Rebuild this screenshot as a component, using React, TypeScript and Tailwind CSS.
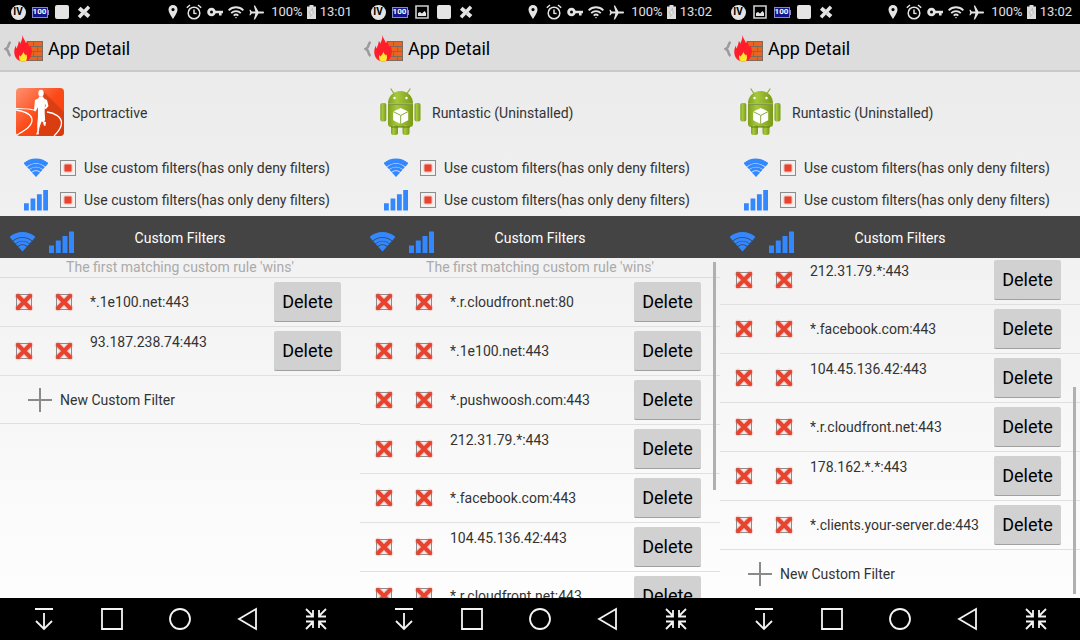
import React from 'react'

type Rule = { host: string; tall?: boolean }

type Screen = {
  id: string
  time: string
  icons: string[]
  app: string
  runner?: boolean
  hint?: boolean
  rules: Rule[]
  addRow?: boolean
  scroll?: 'top' | 'bottom'
}

const screens: Screen[] = [
  {
    id: 'a',
    time: '13:01',
    icons: ['iv', 'battery', 'square', 'cross'],
    app: 'Sportractive',
    runner: true,
    hint: true,
    rules: [{ host: '*.1e100.net:443' }, { host: '93.187.238.74:443', tall: true }],
    addRow: true,
  },
  {
    id: 'b',
    time: '13:02',
    icons: ['iv', 'battery', 'image', 'square', 'cross'],
    app: 'Runtastic (Uninstalled)',
    hint: true,
    rules: [
      { host: '*.r.cloudfront.net:80' },
      { host: '*.1e100.net:443' },
      { host: '*.pushwoosh.com:443' },
      { host: '212.31.79.*:443', tall: true },
      { host: '*.facebook.com:443' },
      { host: '104.45.136.42:443', tall: true },
      { host: '*.r.cloudfront.net:443' },
    ],
    scroll: 'top',
  },
  {
    id: 'c',
    time: '13:02',
    icons: ['iv', 'image', 'battery', 'square', 'cross'],
    app: 'Runtastic (Uninstalled)',
    rules: [
      { host: '212.31.79.*:443', tall: true },
      { host: '*.facebook.com:443' },
      { host: '104.45.136.42:443', tall: true },
      { host: '*.r.cloudfront.net:443' },
      { host: '178.162.*.*:443', tall: true },
      { host: '*.clients.your-server.de:443' },
    ],
    addRow: true,
    scroll: 'bottom',
  },
]

const NoticeIcon = ({ name }: { name: string }) => {
  if (name === 'iv')
    return <span className="flex size-[15px] items-center justify-center rounded-full bg-[#e4e4e4] text-[10px] font-bold leading-none text-black">IV</span>
  if (name === 'battery')
    return (
      <span className="flex items-center">
        <span className="flex h-[11px] w-4 items-center justify-center border border-[#8a8ac8] bg-[#15158c] text-[8px] font-bold leading-none text-white">100</span>
        <span className="h-[5px] w-px bg-[#8a8ac8]" />
      </span>
    )
  if (name === 'image')
    return (
      <svg viewBox="0 0 14 14" className="size-3.5">
        <path d="M1 1h12v12H1z" fill="none" stroke="#cfcfcf" strokeWidth="1.6" />
        <path d="M3 11V8l2-1 2 1.6L9.5 6 11 8v3z" fill="#e4e4e4" />
      </svg>
    )
  if (name === 'square') return <span className="size-3.5 rounded-xs bg-[#e4e4e4]" />
  return (
    <svg viewBox="0 0 14 14" className="size-3.5" stroke="#e4e4e4" fill="none">
      <path d="M2 12.2L12 1.8" strokeWidth="3.4" />
      <path d="M2.2 3.2l3.6 3M8.2 8.2l3.8 3.4" strokeWidth="4" />
    </svg>
  )
}

const StatusBar = ({ time, icons }: { time: string; icons: string[] }) => (
  <div className="flex h-6 shrink-0 items-center bg-black pl-[7px] pr-2 text-[13px] text-[#e0e0e0]">
    {icons.map((name) => (
      <span key={name} className="flex w-[22px] justify-center"><NoticeIcon name={name} /></span>
    ))}
    <div className="ml-auto flex items-center">
      <span className="flex w-[21px] justify-center">
        <svg viewBox="0 0 10 14" className="h-3.5 w-2.5"><path fillRule="evenodd" d="M5 0a4.5 4.5 0 0 0-4.5 4.6C.5 8 5 14 5 14s4.500-6 4.500-9.400A4.500 4.500 0 0 0 5 0zm0 3a1.600 1.600 0 1 1 0 3.200A1.600 1.600 0 0 1 5 3z" fill="#e4e4e4" /></svg>
      </span>
      <span className="flex w-[21px] justify-center">
        <svg viewBox="0 0 16 16" className="size-4" fill="none" stroke="#e4e4e4" strokeWidth="1.500">
          <circle cx="8" cy="9" r="5.800" />
          <path d="M8 5.500V9.300l2.600.1M.8 3.800L4 1M15.200 3.800L12 1" />
        </svg>
      </span>
      <span className="flex w-[21px] justify-center">
        <svg viewBox="0 0 16 10" className="h-2.5 w-4" fill="none" stroke="#e4e4e4">
          <circle cx="4.500" cy="5" r="2.900" strokeWidth="2.800" />
          <path d="M8 5h8M13.300 5v3.500" strokeWidth="2.600" />
        </svg>
      </span>
      <span className="flex w-[21px] justify-center">
        <svg viewBox="0 0 16 13" className="h-[13px] w-4" fill="none" stroke="#e4e4e4" strokeWidth="1.800">
          <path d="M.6 4.300a10.500 10.500 0 0 1 14.800 0M3.200 7.100a6.800 6.800 0 0 1 9.600 0M5.700 9.600a3.300 3.300 0 0 1 4.600 0" />
          <path d="M6.800 11.200h2.400L8 12.600z" fill="#e4e4e4" stroke="none" />
        </svg>
      </span>
      <span className="flex w-[21px] justify-center">
        <svg viewBox="0 0 15 15" className="size-[15px]" fill="#e4e4e4">
          <path d="M15 7.500c0-.7-.5-1-1.200-1H9.500L6 .5H4.800l1.600 6H2.800L1.500 4.700H.4l.8 2.800-.8 2.800h1.100l1.300-1.800h3.600l-1.600 6H6l3.500-6h4.300c.7 0 1.200-.3 1.200-1z" />
        </svg>
      </span>
      <span className="ml-1">100%</span>
      <svg viewBox="0 0 9 14" className="mx-1 h-3.5 w-[9px]">
        <path d="M0 1.500h2.500V0h4v1.500H9V14H0z" fill="#dcdcdc" />
        <path d="M5.500 3.500L2.200 8h2l-.7 3.500L6.800 7h-2z" fill="#fff" stroke="#999" strokeWidth=".5" />
      </svg>
      <span>{time}</span>
    </div>
  </div>
)

const FirewallIcon = () => (
  <svg viewBox="0 0 30 28" className="h-7 w-[30px]">
    <path d="M13 6h16v20H13z" fill="#7d6a60" />
    <path d="M13 7h6v4h-6zM20 7h8v4h-8zM13 12h10v4H13zM24 12h4v4h-4zM13 17h6v4h-6zM20 17h8v4h-8zM13 22h10v3H13zM24 22h4v3h-4z" fill="#e8641f" />
    <path d="M8.500 0c.5 3.500 3 5.500 3.300 8 .8-.6 1-1.500 1-2.500 1.700 3 1.500 4.500 3 7 .5-.8.600-1.500.600-2.500 1.600 3.500 2 7 .6 11-1 3-3.500 5.500-7.500 5.500-4.500 0-8-2.500-9-7C-.2 15.500.8 12.500 2 10.500c0 1.500.2 2.300.8 3C3.500 10.500 4.500 9.500 4.800 6c1 .8 1.300 1.800 1.300 2.800C7.500 6 8.500 3.500 8.500 0z" fill="#ff1f2b" />
    <path d="M9.500 16.500c.2 2 1.500 2.500 1.800 4 .5-.5.700-1 .7-1.800 1.600 3 1.200 5.300-.3 7.800H7c-2-1.500-2.300-4-1.500-6.500.5.500.600 1 .8 1.600 1.500-1.500 2.600-3 3.200-5.100z" fill="#ffe92e" />
  </svg>
)

const RunnerIcon = () => (
  <svg viewBox="0 0 48 48" className="size-12 rounded">
    <defs>
      <linearGradient id="tile" x1="0" y1="0" x2="1" y2="1">
        <stop offset="0" stopColor="#ff9270" />
        <stop offset=".5" stopColor="#fb4a18" />
        <stop offset="1" stopColor="#f83c06" />
      </linearGradient>
    </defs>
    <path d="M0 0h48v48H0z" fill="url(#tile)" />
    <path d="M27 3l21 21v24H21l7-16z" fill="#c73a12" opacity=".65" />
    <g fill="none" stroke="#fff">
      <path d="M0 20.500c6 0 12 .2 18 1.500" strokeWidth="1.200" />
      <path d="M0 22c9 1.500 16 4 16 10C16 39 7 43 0 47.500M31 24c8 1 14.500 5 14.500 11 0 6-4 9-7.500 13" strokeWidth="1.300" />
    </g>
    <g fill="#fff">
      <ellipse cx="25" cy="5.200" rx="2.700" ry="3.400" />
      <path d="M23 8.500h4l1 2 3 1.500 1.500 6-2.500 3-1.500-.6 1.300-2.900-1-2-.6 8 1 8.500-1.200 1.500 2 .5-.6 4-1.600-.5-.8-3.500-2-1L23.500 38l-.8 6.500.3 1.800-3 .2 1.200-3 .3-8 1-9.500.3-8-1.600 2.500-1.800 3-1.500-.8L19 12l3.500-1.700z" />
      <path d="M22 12h7l-.5 14 .5 6-3.500 1.500L23 40l-1.500-.5.500-14z" />
    </g>
  </svg>
)

const AndroidIcon = () => (
  <svg viewBox="0 0 48 48" className="size-12">
    <defs>
      <linearGradient id="droid" x1="0" y1="0" x2="1" y2="0">
        <stop offset="0" stopColor="#7f9f1d" />
        <stop offset=".35" stopColor="#a5c93c" />
        <stop offset="1" stopColor="#7b9a18" />
      </linearGradient>
    </defs>
    <path d="M15 1l3 4.500M34 1l-3 4.500" stroke="#8fae3c" strokeWidth="1.300" strokeLinecap="round" />
    <g fill="url(#droid)">
      <path d="M12 15.500C12 8 17.500 3 24.500 3S37 8 37 15.500z" />
      <path d="M12 16.800h25V36a3 3 0 0 1-3 3H15a3 3 0 0 1-3-3z" />
      <rect x="4.300" y="15" width="6" height="18.500" rx="2" />
      <rect x="38.500" y="15" width="6" height="18.500" rx="2" />
      <rect x="15" y="37" width="7" height="10" rx="2.500" />
      <rect x="26.500" y="37" width="7" height="10" rx="2.500" />
    </g>
    <path d="M12 16.200h25M15 39h19" stroke="#5d7a10" strokeWidth="1" />
    <circle cx="18.500" cy="10" r="1.200" fill="#fff" />
    <circle cx="30.500" cy="10" r="1.200" fill="#fff" />
    <path d="M24.700 20l7.500 3.600v8.600L24.700 36l-7.500-3.800v-8.600z" fill="#fff" />
    <path d="M17.200 23.600l7.500 3.800 7.500-3.800M24.700 27.400V36" stroke="#8aa83a" strokeWidth="1" fill="none" />
  </svg>
)

const WifiIcon = () => (
  <svg viewBox="0 0 25 20" className="h-5 w-[25px]" fill="none" stroke="#3388ff">
    <path d="M1.200 6.800a17 17 0 0 1 22.600 0" strokeWidth="4.900" />
    <path d="M4.300 10.300a12.300 12.300 0 0 1 16.400 0M6.700 13a8.700 8.700 0 0 1 11.600 0" strokeWidth="3" />
    <path d="M8.200 14.700a6.500 6.500 0 0 1 8.600 0l-4.300 4.800z" fill="#3388ff" stroke="none" />
  </svg>
)

const SignalIcon = () => (
  <svg viewBox="0 0 25 22" className="h-[22px] w-[25px]" fill="#3388ff">
    <path d="M0 14.500h5V22H0zM6.800 9.500h5V22h-5zM13.500 5h5v17h-5zM20 .5h5V22h-5z" />
  </svg>
)

// tri-state box: "deny" shows the cross, otherwise the filled dot
const CheckBox = ({ label, deny }: { label?: string; deny?: boolean }) => (
  <span className="grid size-4 shrink-0 place-items-center">
    <input type="checkbox" defaultChecked aria-label={label} className="col-start-1 row-start-1 size-4 appearance-none border border-[#8c8c8c] bg-[#f1f1f1]" />
    <svg viewBox="0 0 16 16" className="pointer-events-none col-start-1 row-start-1 size-4 overflow-visible">
      {deny ? (
        <g fill="none" strokeLinecap="round">
          <path d="M2 2l12 12M14 2L2 14" stroke="#ee4433" strokeOpacity=".2" strokeWidth="6.500" />
          <path d="M2 2l12 12M14 2L2 14" stroke="#e8432e" strokeWidth="4" />
        </g>
      ) : (
        <g fill="#e8432e">
          <rect x="3.500" y="3.500" width="9" height="9" rx="2" opacity=".3" />
          <rect x="4.500" y="4.500" width="7" height="7" rx="1" />
        </g>
      )}
    </svg>
  </span>
)

const RuleRow = ({ rule }: { rule: Rule }) => (
  <li className="flex h-[49px] shrink-0 items-center border-b border-[#e0e0e0] pl-4 pr-[19px]">
    <div className="flex gap-6">
      <CheckBox deny label={`Wifi ${rule.host}`} />
      <CheckBox deny label={`Mobile ${rule.host}`} />
    </div>
    <span className={`ml-[18px] flex-1 whitespace-nowrap ${rule.tall ? 'pb-[18px]' : ''}`}>{rule.host}</span>
    <button className="h-10 w-[67px] rounded-xs border-b border-[#a0a0a0] bg-[#d1d1d1] text-lg text-black">Delete</button>
  </li>
)

const NavBar = () => (
  <nav className="grid h-[42px] shrink-0 grid-cols-5 bg-black px-2.5">
    {[
      { name: 'Hide', d: 'M3 2h18M12 6v16M4 14l8 8 8-8' },
      { name: 'Recent', d: 'M2 2h20v20H2z' },
      { name: 'Home', d: 'M22 12a10 10 0 1 1-20 0 10 10 0 0 1 20 0z' },
      { name: 'Back', d: 'M20 2v20L3 12z' },
      { name: 'Shrink', d: 'M2 2l7 7M9 3v6.500H2M22 2l-7 7M15 3v6.500h7M2 22l7-7M2 14.500h7V21M22 22l-7-7M22 14.500h-7V21' },
    ].map((b) => (
      <button key={b.name} aria-label={b.name} className="flex items-center justify-center">
        <svg viewBox="0 0 24 24" className="size-6" fill="none" stroke="#f4f4f4" strokeWidth="1.800"><path d={b.d} /></svg>
      </button>
    ))}
  </nav>
)

const Phone = ({ screen }: { screen: Screen }) => (
  <section className="flex h-full min-w-0 flex-col overflow-hidden bg-linear-to-b from-[#e9e9e9] to-white">
    <StatusBar time={screen.time} icons={screen.icons} />
    <header className="flex h-12 shrink-0 items-center border-b-2 border-[#c9c9c9] bg-[#dddddd] pl-1 pt-[3px]">
      <button aria-label="Back" className="flex items-center">
        <svg viewBox="0 0 8 16" className="h-4 w-2" fill="none" stroke="#9c9c9c" strokeWidth="2.600"><path d="M6.500 1Q5 2 4.500 4.500 4 7 1.800 8 4 9 4.500 11.500 5 14 6.500 15" /></svg>
        <span className="ml-0.5"><FirewallIcon /></span>
      </button>
      <h1 className="ml-1 text-lg text-black">App Detail</h1>
    </header>

    <div className="flex h-20 shrink-0 items-center gap-2 px-4">
      {screen.runner ? <RunnerIcon /> : <AndroidIcon />}
      <span className="pt-0.5">{screen.app}</span>
    </div>
    {['wifi', 'mobile'].map((net) => (
      <div key={net} className="flex h-8 shrink-0 items-center gap-3 pl-6">
        <span className="flex w-6 justify-center">{net === 'wifi' ? <WifiIcon /> : <SignalIcon />}</span>
        <label className="flex items-center gap-2 whitespace-nowrap">
          <CheckBox />
          Use custom filters(has only deny filters)
        </label>
      </div>
    ))}

    <div className="grid h-[42px] shrink-0 grid-cols-[1fr_auto_1fr] items-center bg-[#444444] text-white">
      <div className="flex items-center gap-3.5 pl-2.5 pt-2.5">
        <WifiIcon />
        <SignalIcon />
      </div>
      <h2 className="pt-0.5">Custom Filters</h2>
    </div>

    <div className="relative min-h-0 flex-1">
      <ul className={`flex h-full flex-col overflow-hidden ${screen.scroll === 'bottom' ? 'justify-end' : ''}`}>
        {screen.hint && (
          <li className="shrink-0 border-b border-[#dcdcdc] text-center leading-[19px] text-[#aaaaaa]">The first matching custom rule 'wins'</li>
        )}
        {screen.rules.map((rule) => (
          <RuleRow key={rule.host} rule={rule} />
        ))}
        {screen.addRow && (
          <li className={`h-12 shrink-0 ${screen.scroll ? '' : 'border-b border-[#e0e0e0]'}`}>
            <button className="flex h-full w-full items-center gap-2 pl-7">
              <svg viewBox="0 0 24 24" className="size-6" stroke="#8a8a8a" strokeWidth="2"><path d="M12 0v24M0 12h24" /></svg>
              New Custom Filter
            </button>
          </li>
        )}
      </ul>
      {screen.scroll === 'top' && <div className="absolute right-1 top-1 h-[67%] w-[3px] bg-[#b0b0b0]" />}
      {screen.scroll === 'bottom' && <div className="absolute bottom-1 right-1 h-[61%] w-[3px] bg-[#b0b0b0]" />}
    </div>
    <NavBar />
  </section>
)

export default function App() {
  return (
    <main className="grid h-screen grid-cols-3 font-['Roboto',sans-serif] text-sm text-[#333333]">
      {screens.map((screen) => (
        <Phone key={screen.id} screen={screen} />
      ))}
    </main>
  )
}
